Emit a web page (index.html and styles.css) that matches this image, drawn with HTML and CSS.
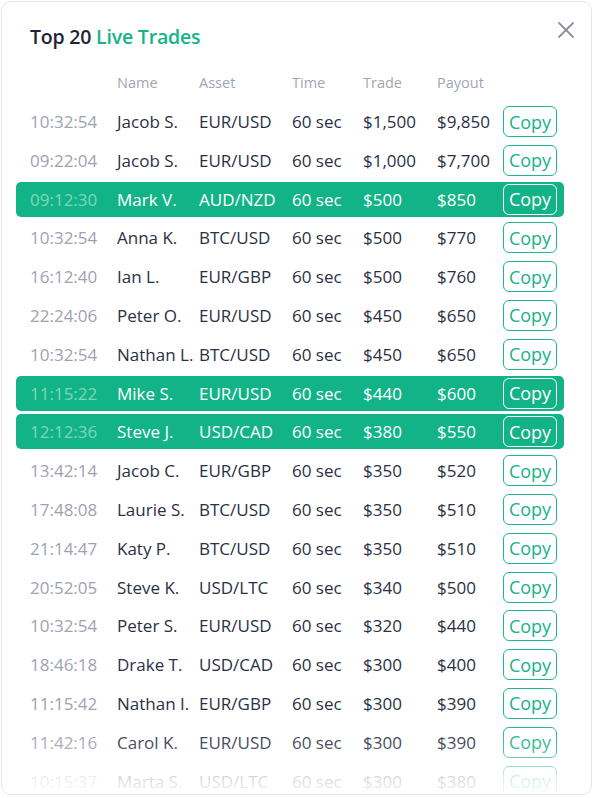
FILE: index.html
```html
<!DOCTYPE html>
<html>
<head>
<meta charset="utf-8">
<link rel="stylesheet" href="styles.css">
</head>
<body>
<div class="card">
  <div class="head">
    <h1 class="title">Top 20 <span class="accent">Live Trades</span></h1>
    <button class="close" aria-label="Close">
      <svg width="18" height="18" viewBox="0 0 18 18"><path d="M2 2 L16 16 M16 2 L2 16" stroke="#8b909c" stroke-width="1.8" stroke-linecap="round" fill="none"/></svg>
    </button>
  </div>
  <div class="cols">
    <span></span><span>Name</span><span>Asset</span><span>Time</span><span>Trade</span><span>Payout</span><span></span>
  </div>
  <div class="list">
    <div class="row"><span class="t">10:32:54</span><span>Jacob S.</span><span>EUR/USD</span><span>60 sec</span><span>$1,500</span><span>$9,850</span><button class="copy">Copy</button></div>
    <div class="row"><span class="t">09:22:04</span><span>Jacob S.</span><span>EUR/USD</span><span>60 sec</span><span>$1,000</span><span>$7,700</span><button class="copy">Copy</button></div>
    <div class="row hl"><span class="t">09:12:30</span><span>Mark V.</span><span>AUD/NZD</span><span>60 sec</span><span>$500</span><span>$850</span><button class="copy">Copy</button></div>
    <div class="row"><span class="t">10:32:54</span><span>Anna K.</span><span>BTC/USD</span><span>60 sec</span><span>$500</span><span>$770</span><button class="copy">Copy</button></div>
    <div class="row"><span class="t">16:12:40</span><span>Ian L.</span><span>EUR/GBP</span><span>60 sec</span><span>$500</span><span>$760</span><button class="copy">Copy</button></div>
    <div class="row"><span class="t">22:24:06</span><span>Peter O.</span><span>EUR/USD</span><span>60 sec</span><span>$450</span><span>$650</span><button class="copy">Copy</button></div>
    <div class="row"><span class="t">10:32:54</span><span>Nathan L.</span><span>BTC/USD</span><span>60 sec</span><span>$450</span><span>$650</span><button class="copy">Copy</button></div>
    <div class="row hl"><span class="t">11:15:22</span><span>Mike S.</span><span>EUR/USD</span><span>60 sec</span><span>$440</span><span>$600</span><button class="copy">Copy</button></div>
    <div class="row hl"><span class="t">12:12:36</span><span>Steve J.</span><span>USD/CAD</span><span>60 sec</span><span>$380</span><span>$550</span><button class="copy">Copy</button></div>
    <div class="row"><span class="t">13:42:14</span><span>Jacob C.</span><span>EUR/GBP</span><span>60 sec</span><span>$350</span><span>$520</span><button class="copy">Copy</button></div>
    <div class="row"><span class="t">17:48:08</span><span>Laurie S.</span><span>BTC/USD</span><span>60 sec</span><span>$350</span><span>$510</span><button class="copy">Copy</button></div>
    <div class="row"><span class="t">21:14:47</span><span>Katy P.</span><span>BTC/USD</span><span>60 sec</span><span>$350</span><span>$510</span><button class="copy">Copy</button></div>
    <div class="row"><span class="t">20:52:05</span><span>Steve K.</span><span>USD/LTC</span><span>60 sec</span><span>$340</span><span>$500</span><button class="copy">Copy</button></div>
    <div class="row"><span class="t">10:32:54</span><span>Peter S.</span><span>EUR/USD</span><span>60 sec</span><span>$320</span><span>$440</span><button class="copy">Copy</button></div>
    <div class="row"><span class="t">18:46:18</span><span>Drake T.</span><span>USD/CAD</span><span>60 sec</span><span>$300</span><span>$400</span><button class="copy">Copy</button></div>
    <div class="row"><span class="t">11:15:42</span><span>Nathan I.</span><span>EUR/GBP</span><span>60 sec</span><span>$300</span><span>$390</span><button class="copy">Copy</button></div>
    <div class="row"><span class="t">11:42:16</span><span>Carol K.</span><span>EUR/USD</span><span>60 sec</span><span>$300</span><span>$390</span><button class="copy">Copy</button></div>
    <div class="row"><span class="t">10:15:37</span><span>Marta S.</span><span>USD/LTC</span><span>60 sec</span><span>$300</span><span>$380</span><button class="copy">Copy</button></div>
  </div>
  <div class="fade"></div>
</div>
</body>
</html>
```

FILE: styles.css
```css
* { box-sizing: border-box; }
html, body { margin: 0; padding: 0; background: #ffffff; }
body {
  padding: 1px 2px 3px 1px;
  font-family: "Open Sans", "Noto Sans", sans-serif;
  color: #2a3044;
}
.card {
  position: relative;
  height: 794px;
  border: 1px solid #e4e5ea;
  border-radius: 10px;
  background: #fff;
  overflow: hidden;
}
.head {
  display: flex;
  justify-content: space-between;
  align-items: flex-start;
  padding: 21px 16px 0 28px;
}
.title {
  margin: 0;
  font-size: 19.5px;
  font-weight: 600;
  line-height: 28px;
  color: #1e2539;
  letter-spacing: -0.2px;
}
.accent { color: #13b587; }
.close {
  border: 0;
  background: none;
  padding: 0;
  margin-top: -2px;
  width: 18px;
  height: 18px;
  cursor: pointer;
}
.cols, .row {
  display: grid;
  grid-template-columns: 87px 82px 93px 71px 74px 66px 54px;
  align-items: center;
  width: 548px;
}
.cols {
  margin: 17px 0 0 14px;
  padding-left: 14px;
  height: 28px;
  font-size: 14.5px;
  color: #a1a6b2;
}
.list {
  display: flex;
  flex-direction: column;
  gap: 3.8px;
  margin: 8px 0 0 14px;
}
.row {
  height: 35px;
  padding-left: 14px;
  border-radius: 5px;
  font-size: 17px;
  color: #2a3044;
  white-space: nowrap;
}
.row .t { color: #9ea2b0; }
.row.hl { background: #12b387; color: #ffffff; }
.row.hl .t { color: #7fd6bb; }
.copy {
  width: 54px;
  height: 31px;
  padding: 0;
  border: 1.5px solid #22b68d;
  border-radius: 6px;
  background: transparent;
  color: #16b386;
  font-family: inherit;
  font-size: 18px;
  line-height: 1;
  cursor: pointer;
}
.row.hl .copy { border-color: #ffffff; color: #ffffff; }
.fade {
  position: absolute;
  left: 0; right: 0; bottom: 0;
  height: 70px;
  background: linear-gradient(to bottom, rgba(255,255,255,0) 0%, rgba(255,255,255,0.2) 40%, rgba(255,255,255,0.8) 75%, rgba(255,255,255,0.95) 100%);
  pointer-events: none;
}
```
